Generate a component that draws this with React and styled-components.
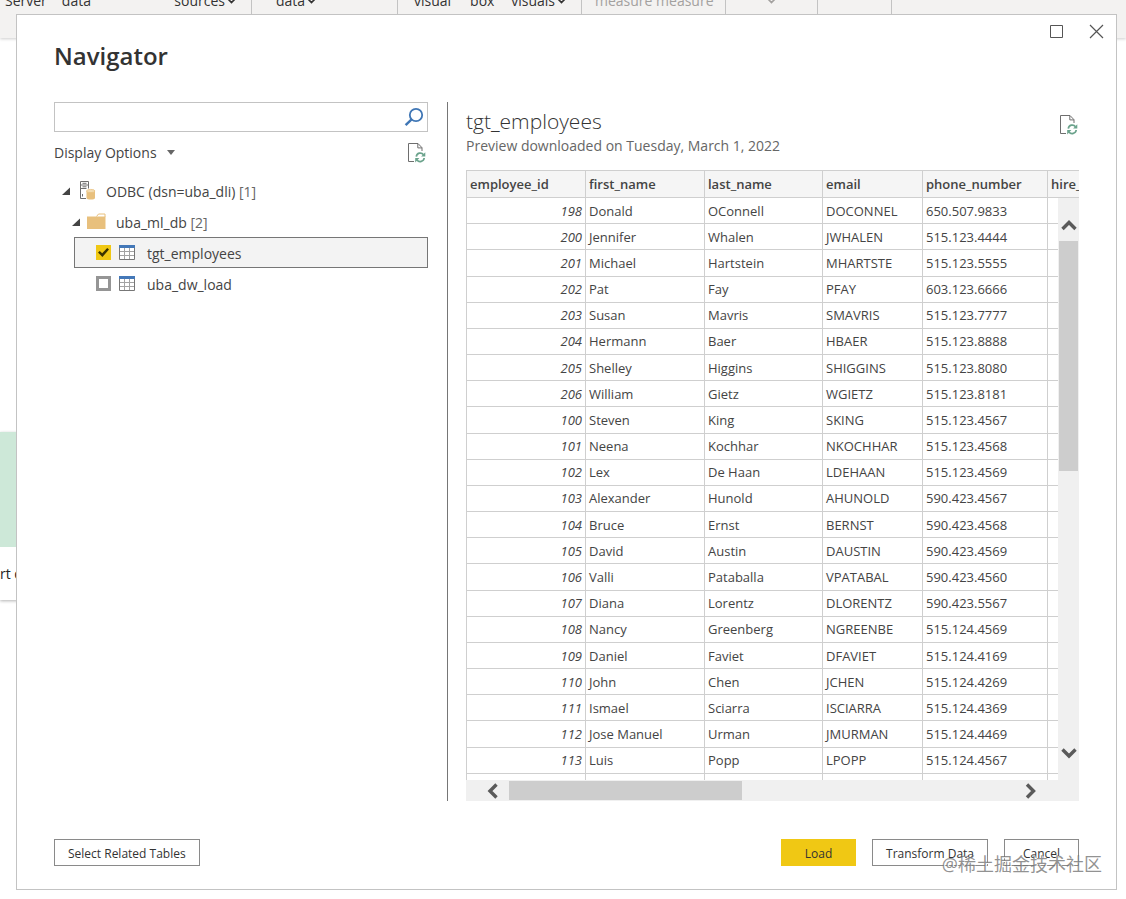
import React, { useState } from 'react';
import styled, { createGlobalStyle, css } from 'styled-components';

const palette = {
  ribbon: '#F3F2F1',
  line: '#C3C3C3',
  grid: '#CFCFCF',
  text: '#444444',
  dark: '#333333',
  muted: '#666666',
  accent: '#F0C814',
  track: '#F0F0F0',
  thumb: '#CDCDCD',
};

const GlobalStyle = createGlobalStyle`
  * {
    box-sizing: border-box;
  }
  body {
    margin: 0;
    background: #fff;
    color: ${palette.text};
    font-family: 'Open Sans', 'Noto Sans', 'Noto Sans CJK SC', sans-serif;
    font-size: 14px;
    overflow: hidden;
  }
  button, input {
    font-family: inherit;
  }
`;

const Page = styled.div`
  position: relative;
  height: 100vh;
  overflow: hidden;
`;

const Ribbon = styled.div`
  display: flex;
  height: 38px;
  overflow: hidden;
  background: ${palette.ribbon};
  box-shadow: 0 1px 3px rgba(0, 0, 0, 0.2);
`;

const RibbonGroup = styled.div`
  display: flex;
  flex: none;
  justify-content: ${props => props.$justify || 'flex-start'};
  width: ${props => props.$width}px;
  margin-top: -10px;
  padding: 0 15px 0 ${props => props.$indent || 15}px;
  border-right: 1px solid ${palette.line};
  line-height: 21px;
  color: ${props => (props.$disabled ? '#A3A19F' : palette.dark)};
`;

const RibbonLabel = styled.span`
  display: flex;
  align-items: center;
  gap: ${props => props.$gap || 2}px;
  height: 21px;
  white-space: nowrap;
`;

const Canvas = styled.div`
  padding-top: 394px;
`;

const StartCard = styled.div`
  width: 32px;
  overflow: hidden;
  background: #fff;
  box-shadow: 0 1px 3px rgba(0, 0, 0, 0.3);
`;

const StartCardCover = styled.div`
  height: 115px;
  background: #CDE8D8;
`;

const StartCardText = styled.div`
  height: 53px;
  line-height: 53px;
  color: #222;
  white-space: nowrap;
`;

const Dialog = styled.div`
  position: absolute;
  top: 14px;
  right: 9px;
  bottom: 9px;
  left: 16px;
  display: flex;
  flex-direction: column;
  background: #fff;
  border: 1px solid ${palette.line};
`;

const DialogHeader = styled.header`
  display: flex;
  justify-content: space-between;
  align-items: flex-start;
  height: 87px;
  padding-left: 37px;
`;

const Title = styled.h1`
  margin: 0;
  padding-top: 24px;
  font-size: 24px;
  line-height: 34px;
  font-weight: 600;
  color: ${palette.dark};
`;

const WindowControls = styled.div`
  display: flex;
`;

const PlainButton = styled.button`
  display: flex;
  align-items: center;
  justify-content: center;
  padding: 0;
  border: none;
  background: transparent;
  color: ${palette.text};
  cursor: pointer;
`;

const WindowButton = styled(PlainButton)`
  width: 40px;
  height: 33px;
`;

const DialogBody = styled.div`
  display: flex;
  flex: 1;
  min-height: 0;
  padding: 0 37px;
`;

const SourcePane = styled.section`
  flex: none;
  width: 394px;
  padding-right: 19px;
  border-right: 1px solid #767676;
`;

const SearchBox = styled.div`
  display: flex;
  align-items: center;
  height: 30px;
  padding-right: 3px;
  border: 1px solid ${palette.line};
`;

const SearchInput = styled.input`
  flex: 1;
  min-width: 0;
  height: 28px;
  padding: 0 8px;
  border: none;
  outline: 0;
  background: transparent;
  font-size: 14px;
`;

const OptionsRow = styled.div`
  display: flex;
  align-items: center;
  justify-content: space-between;
  height: 41px;
  margin-bottom: 2px;
  padding-right: 2px;
`;

const OptionsButton = styled(PlainButton)`
  gap: 10px;
  font-size: 14px;
  line-height: 20px;
`;

const Tree = styled.ul`
  margin: 0;
  padding: 0;
  list-style: none;
`;

const TreeRow = styled.div`
  display: flex;
  align-items: center;
  height: 31px;
  margin-left: ${props => props.$indent}px;
  border: 1px solid transparent;
  ${props => props.$selected && css`
    background: #F3F3F3;
    border-color: #767676;
  `}
`;

const Caret = styled(PlainButton)`
  width: 10px;
  height: 16px;
  margin-right: ${props => props.$gap}px;
`;

const TreeLabel = styled.label`
  margin-left: ${props => props.$gap || 10}px;
  padding-top: 2px;
  line-height: 20px;
  white-space: nowrap;
`;

const Count = styled.span`
  color: ${palette.muted};
`;

const Checkbox = styled.input`
  appearance: none;
  display: flex;
  align-items: center;
  justify-content: center;
  width: 15px;
  height: 15px;
  margin: 0 8px 0 21px;
  border: 3px solid #959595;
  background: #fff;
  &:checked {
    border-color: ${palette.accent};
    background: ${palette.accent};
  }
  &:checked::before {
    content: '';
    flex: none;
    width: 11px;
    height: 9px;
    background: #3B3300;
    clip-path: polygon(0 50%, 16% 32%, 38% 58%, 84% 0, 100% 16%, 40% 100%);
  }
`;

const PreviewPane = styled.section`
  display: flex;
  flex: 1;
  flex-direction: column;
  min-width: 0;
  padding-left: 18px;
`;

const PreviewHeader = styled.div`
  display: flex;
  justify-content: space-between;
  align-items: flex-start;
  height: 68px;
  padding: 5px 1px 0 0;
`;

const PreviewTitle = styled.h2`
  margin: 0;
  font-size: 21px;
  line-height: 28px;
  font-weight: 300;
  color: ${palette.dark};
`;

const PreviewNote = styled.p`
  margin: 0;
  line-height: 22px;
  color: ${palette.muted};
`;

const RefreshButton = styled(PlainButton)`
  width: 18px;
  height: 36px;
`;

const TableFrame = styled.div`
  position: relative;
  flex: 1;
  min-height: 0;
  overflow: hidden;
  border-top: 1px solid ${palette.grid};
  border-left: 1px solid ${palette.grid};
`;

const DataTable = styled.table`
  table-layout: fixed;
  width: 701px;
  height: 629px;
  border-spacing: 0;
  font-size: 13px;
`;

const HeadCell = styled.th`
  width: ${props => props.$width}px;
  height: 27px;
  padding: 0 3px;
  border-right: 1px solid ${palette.grid};
  border-bottom: 1px solid ${palette.grid};
  background: #F5F5F5;
  font-weight: 600;
  line-height: 18px;
  text-align: left;
  white-space: nowrap;
`;

const Cell = styled.td`
  padding: 0 3px;
  border-right: 1px solid ${palette.grid};
  border-bottom: 1px solid ${palette.grid};
  line-height: 18px;
  white-space: nowrap;
  ${props => props.$number && css`
    font-style: italic;
    text-align: right;
  `}
`;

// sits on top of the last column, below the column headers
const VerticalScroll = styled.div`
  position: absolute;
  top: 27px;
  right: 0;
  bottom: 0;
  display: flex;
  flex-direction: column;
  align-items: center;
  width: 21px;
  padding: 13px 1px 12px;
  background: ${palette.track};
`;

const HorizontalScroll = styled.div`
  display: flex;
  align-items: center;
  height: 21px;
  padding: 0 41px 0 19px;
  background: ${palette.track};
`;

const ScrollButton = styled(PlainButton)`
  flex: none;
  width: ${props => (props.$vertical ? 18 : 16)}px;
  height: ${props => (props.$vertical ? 30 : 19)}px;
`;

const Track = styled.div`
  display: flex;
  flex: 1;
  flex-direction: ${props => (props.$vertical ? 'column' : 'row')};
  align-self: stretch;
  padding: ${props => (props.$vertical ? '0' : '1px 8px')};
`;

const Thumb = styled.div`
  flex: none;
  ${props => (props.$vertical ? 'height: 230px;' : 'width: 233px;')}
  background: ${palette.thumb};
`;

const DialogFooter = styled.footer`
  display: flex;
  justify-content: space-between;
  padding: 38px 37px 23px;
`;

const ButtonGroup = styled.div`
  display: flex;
  gap: 16px;
`;

const Button = styled.button`
  min-width: 75px;
  height: 27px;
  padding: 2px 13px 0;
  border: 1px solid ${props => (props.$primary ? palette.accent : '#8A8A8A')};
  background: ${props => (props.$primary ? palette.accent : '#fff')};
  color: ${palette.dark};
  font-size: 12px;
  line-height: 18px;
  white-space: nowrap;
  cursor: pointer;
`;

const Watermark = styled.div`
  position: absolute;
  right: 24px;
  bottom: 21px;
  font-family: 'Open Sans', 'Noto Sans CJK SC', sans-serif;
  font-size: 18px;
  line-height: 28px;
  color: rgba(110, 110, 110, 0.75);
  text-shadow: 1px 1px 0 #fff;
  pointer-events: none;
`;

const SmallChevron = () => (
  <svg width="9" height="6" viewBox="0 0 9 6" fill="none" stroke="currentColor" strokeWidth="1.6">
    <path d="M1 1l3.5 3.5L8 1" />
  </svg>
);

const SearchIcon = () => (
  <svg width="20" height="20" viewBox="0 0 20 20" fill="none" stroke="#3F76B5">
    <circle cx="12" cy="8" r="6.2" strokeWidth="1.8" />
    <path d="M7.6 12.4L1.6 18.2" strokeWidth="2.4" />
  </svg>
);

const RefreshIcon = () => (
  <svg width="18" height="20" viewBox="0 0 18 20" fill="none">
    <path d="M6 18.5H.5V.5h9.5l4 4.2V8M9.8.8v4.1H14" stroke="#6E6E6E" />
    <g stroke="#6BA38C" strokeWidth="1.7">
      <path d="M8.3 13.6a4 4 0 0 1 7.2-1.9" />
      <path d="M16.2 15a4 4 0 0 1-7.2 1.9" />
    </g>
    <path d="M17.3 9.2v4.3h-4.2zM7.2 19.4v-4.3h4.2z" fill="#6BA38C" />
  </svg>
);

const ExpandedIcon = () => (
  <svg width="8" height="8" viewBox="0 0 8 8">
    <path d="M8 .5V8H0z" fill="#444" />
  </svg>
);

const ServerIcon = () => (
  <svg width="16" height="19" viewBox="0 0 16 19" fill="none">
    <path d="M6 17.5H.5V.5h8v7M.5 4h8M.5 7.5h6M2.5 2.3h4M2.5 5.8h4M2.5 13v2.5" stroke="#6E6E6E" />
    <path d="M6.5 10v7c0 2 8.5 2 8.5 0v-7z" fill="#E8C07D" />
    <ellipse cx="10.75" cy="10" rx="4.25" ry="1.6" fill="#F3DCB2" stroke="#E8C07D" strokeWidth=".8" />
  </svg>
);

const FolderIcon = () => (
  <svg width="19" height="17" viewBox="0 0 19 17">
    <path d="M9.5 3.5L11.5 1H18v3" fill="#fff" stroke="#E8C07D" />
    <path d="M0 3.5h18.5V16H0z" fill="#E8C07D" />
  </svg>
);

const TableIcon = () => (
  <svg width="16" height="15" viewBox="0 0 16 15" fill="none">
    <path d="M.5 2v12.5h15V2" fill="#fff" stroke="#777" />
    <path d="M1 6.5h14M1 10.5h14M5.5 3v11M10.5 3v11" stroke="#A3A3A3" />
    <path d="M0 0h16v3H0z" fill="#4478B8" />
  </svg>
);

const arrows = {
  up: 'M1.5 11L8 4.5l6.5 6.5',
  down: 'M1.5 4.5L8 11l6.5-6.5',
  left: 'M11.5 1.5L5 8l6.5 6.5',
  right: 'M5 1.5L11.5 8 5 14.5',
};

const Arrow = ({ to }) => (
  <svg width="16" height="16" viewBox="0 0 16 16" fill="none">
    <path d={arrows[to]} stroke="#5A5A5A" strokeWidth="3.4" />
  </svg>
);

const columns = [
  { name: 'employee_id', width: 119 },
  { name: 'first_name', width: 119 },
  { name: 'last_name', width: 118 },
  { name: 'email', width: 100 },
  { name: 'phone_number', width: 125 },
  { name: 'hire_date', width: 120 },
];

const employees = [
  [198, 'Donald', 'OConnell', 'DOCONNEL', '650.507.9833'],
  [200, 'Jennifer', 'Whalen', 'JWHALEN', '515.123.4444'],
  [201, 'Michael', 'Hartstein', 'MHARTSTE', '515.123.5555'],
  [202, 'Pat', 'Fay', 'PFAY', '603.123.6666'],
  [203, 'Susan', 'Mavris', 'SMAVRIS', '515.123.7777'],
  [204, 'Hermann', 'Baer', 'HBAER', '515.123.8888'],
  [205, 'Shelley', 'Higgins', 'SHIGGINS', '515.123.8080'],
  [206, 'William', 'Gietz', 'WGIETZ', '515.123.8181'],
  [100, 'Steven', 'King', 'SKING', '515.123.4567'],
  [101, 'Neena', 'Kochhar', 'NKOCHHAR', '515.123.4568'],
  [102, 'Lex', 'De Haan', 'LDEHAAN', '515.123.4569'],
  [103, 'Alexander', 'Hunold', 'AHUNOLD', '590.423.4567'],
  [104, 'Bruce', 'Ernst', 'BERNST', '590.423.4568'],
  [105, 'David', 'Austin', 'DAUSTIN', '590.423.4569'],
  [106, 'Valli', 'Pataballa', 'VPATABAL', '590.423.4560'],
  [107, 'Diana', 'Lorentz', 'DLORENTZ', '590.423.5567'],
  [108, 'Nancy', 'Greenberg', 'NGREENBE', '515.124.4569'],
  [109, 'Daniel', 'Faviet', 'DFAVIET', '515.124.4169'],
  [110, 'John', 'Chen', 'JCHEN', '515.124.4269'],
  [111, 'Ismael', 'Sciarra', 'ISCIARRA', '515.124.4369'],
  [112, 'Jose Manuel', 'Urman', 'JMURMAN', '515.124.4469'],
  [113, 'Luis', 'Popp', 'LPOPP', '515.124.4567'],
  ['\u00a0', '', '', '', ''],
];

const TopRibbon = () => (
  <Ribbon>
    <RibbonGroup $width={252} $indent={5} $justify="space-between">
      <RibbonLabel $gap={15}><span>Server</span><span>data</span></RibbonLabel>
      <RibbonLabel>sources<SmallChevron /></RibbonLabel>
    </RibbonGroup>
    <RibbonGroup $width={146} $indent={24}>
      <RibbonLabel>data<SmallChevron /></RibbonLabel>
    </RibbonGroup>
    <RibbonGroup $width={184} $indent={16} $justify="space-between">
      <RibbonLabel $gap={19}><span>visual</span><span>box</span></RibbonLabel>
      <RibbonLabel>visuals<SmallChevron /></RibbonLabel>
    </RibbonGroup>
    <RibbonGroup $width={144} $indent={13} $disabled>
      <RibbonLabel>measure measure</RibbonLabel>
    </RibbonGroup>
    <RibbonGroup $width={92} $justify="center" $disabled>
      <RibbonLabel><SmallChevron /></RibbonLabel>
    </RibbonGroup>
    <RibbonGroup $width={74} />
  </Ribbon>
);

const SourceTree = () => {
  const [checked, setChecked] = useState({ tgt_employees: true, uba_dw_load: false });
  const toggle = name => setChecked({ ...checked, [name]: !checked[name] });

  return (
    <Tree>
      <li>
        <TreeRow $indent={6}>
          <Caret $gap={9} aria-label="Collapse ODBC"><ExpandedIcon /></Caret>
          <ServerIcon />
          <TreeLabel as="span">ODBC (dsn=uba_dli) <Count>[1]</Count></TreeLabel>
        </TreeRow>
        <Tree>
          <li>
            <TreeRow $indent={16}>
              <Caret $gap={6} aria-label="Collapse uba_ml_db"><ExpandedIcon /></Caret>
              <FolderIcon />
              <TreeLabel as="span">uba_ml_db <Count>[2]</Count></TreeLabel>
            </TreeRow>
            <Tree>
              {Object.keys(checked).map(name => (
                <li key={name}>
                  <TreeRow $indent={20} $selected={name === 'tgt_employees'}>
                    <Checkbox
                      type="checkbox"
                      id={name}
                      checked={checked[name]}
                      onChange={() => toggle(name)}
                    />
                    <TableIcon />
                    <TreeLabel htmlFor={name} $gap={12}>{name}</TreeLabel>
                  </TreeRow>
                </li>
              ))}
            </Tree>
          </li>
        </Tree>
      </li>
    </Tree>
  );
};

const Preview = () => (
  <PreviewPane>
    <PreviewHeader>
      <div>
        <PreviewTitle>tgt_employees</PreviewTitle>
        <PreviewNote>Preview downloaded on Tuesday, March 1, 2022</PreviewNote>
      </div>
      <RefreshButton aria-label="Refresh preview"><RefreshIcon /></RefreshButton>
    </PreviewHeader>
    <TableFrame>
      <DataTable>
        <thead>
          <tr>
            {columns.map(column => (
              <HeadCell key={column.name} $width={column.width}>{column.name}</HeadCell>
            ))}
          </tr>
        </thead>
        <tbody>
          {employees.map((row, index) => (
            <tr key={index}>
              {row.map((value, i) => (
                <Cell key={i} $number={i === 0}>{value}</Cell>
              ))}
              <Cell />
            </tr>
          ))}
        </tbody>
      </DataTable>
      <VerticalScroll>
        <ScrollButton $vertical aria-label="Scroll up"><Arrow to="up" /></ScrollButton>
        <Track $vertical><Thumb $vertical /></Track>
        <ScrollButton $vertical aria-label="Scroll down"><Arrow to="down" /></ScrollButton>
      </VerticalScroll>
    </TableFrame>
    <HorizontalScroll>
      <ScrollButton aria-label="Scroll left"><Arrow to="left" /></ScrollButton>
      <Track><Thumb /></Track>
      <ScrollButton aria-label="Scroll right"><Arrow to="right" /></ScrollButton>
    </HorizontalScroll>
  </PreviewPane>
);

const App = () => (
  <Page>
    <GlobalStyle />
    <TopRibbon />
    <Canvas>
      <StartCard>
        <StartCardCover />
        <StartCardText>rt data</StartCardText>
      </StartCard>
    </Canvas>
    <Dialog role="dialog" aria-labelledby="dialog-title">
      <DialogHeader>
        <Title id="dialog-title">Navigator</Title>
        <WindowControls>
          <WindowButton aria-label="Maximize">
            <svg width="13" height="13" viewBox="0 0 13 13" fill="none" stroke="#555">
              <path d="M.5 .5h12v12H.5z" />
            </svg>
          </WindowButton>
          <WindowButton aria-label="Close">
            <svg width="15" height="15" viewBox="0 0 15 15" fill="none" stroke="#555" strokeWidth="1.2">
              <path d="M1 1l13 13M14 1L1 14" />
            </svg>
          </WindowButton>
        </WindowControls>
      </DialogHeader>
      <DialogBody>
        <SourcePane>
          <SearchBox>
            <SearchInput type="text" aria-label="Search" />
            <SearchIcon />
          </SearchBox>
          <OptionsRow>
            <OptionsButton>
              Display Options
              <svg width="8" height="5" viewBox="0 0 8 5"><path d="M0 0h8L4 5z" fill="#666" /></svg>
            </OptionsButton>
            <RefreshButton aria-label="Refresh"><RefreshIcon /></RefreshButton>
          </OptionsRow>
          <SourceTree />
        </SourcePane>
        <Preview />
      </DialogBody>
      <DialogFooter>
        <Button>Select Related Tables</Button>
        <ButtonGroup>
          <Button $primary>Load</Button>
          <Button>Transform Data</Button>
          <Button>Cancel</Button>
        </ButtonGroup>
      </DialogFooter>
    </Dialog>
    <Watermark>@稀土掘金技术社区</Watermark>
  </Page>
);

export default App;
